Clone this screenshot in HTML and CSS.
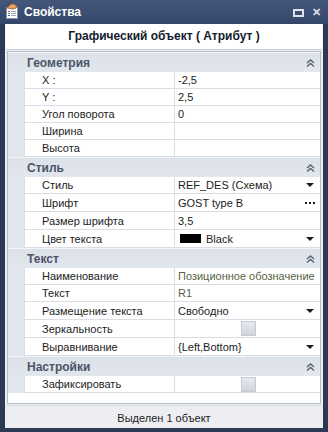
FILE: index.html
```html
<!DOCTYPE html>
<html lang="ru">
<head>
  <meta charset="UTF-8">
  <title>Свойства</title>
  <link rel="stylesheet" href="styles.css">
</head>
<body>
  <div class="window">

    <div class="titlebar">
      <svg class="app-icon" width="16" height="16" viewBox="0 0 16 16">
        <rect x="2.5" y="4.5" width="11" height="11" fill="#fff" stroke="#8a96a8"/>
        <rect x="4" y="8" width="2" height="1" fill="#d23c2c"/>
        <rect x="7" y="8" width="5" height="1" fill="#9aa4b4"/>
        <rect x="4" y="10" width="2" height="1" fill="#3c9a3c"/>
        <rect x="7" y="10" width="5" height="1" fill="#9aa4b4"/>
        <rect x="4" y="12" width="2" height="1" fill="#3c64c8"/>
        <rect x="7" y="12" width="5" height="1" fill="#9aa4b4"/>
        <path d="M3 5 L7 1 L10 1 L13 3 L12 5 L9 6 Z" fill="#e8a060" stroke="#8c5a2c" stroke-width="0.8"/>
      </svg>
      <span class="title">Свойства</span>
      <span class="win-btn max"></span>
      <span class="win-btn close">✕</span>
    </div>

    <div class="body">
      <div class="caption">Графический объект ( Атрибут )</div>

      <div class="grid">

        <div class="section">Геометрия<svg class="fold" width="9" height="8" viewBox="0 0 9 8"><path d="M1 4 L4.5 1 L8 4 M1 7.5 L4.5 4.5 L8 7.5" fill="none" stroke="#5a6272" stroke-width="1.4"/></svg></div>
        <div class="row"><span class="label">X :</span><span class="value">-2,5</span></div>
        <div class="row"><span class="label">Y :</span><span class="value">2,5</span></div>
        <div class="row"><span class="label">Угол поворота</span><span class="value">0</span></div>
        <div class="row"><span class="label">Ширина</span><span class="value"></span></div>
        <div class="row"><span class="label">Высота</span><span class="value"></span></div>

        <div class="section">Стиль<svg class="fold" width="9" height="8" viewBox="0 0 9 8"><path d="M1 4 L4.5 1 L8 4 M1 7.5 L4.5 4.5 L8 7.5" fill="none" stroke="#5a6272" stroke-width="1.4"/></svg></div>
        <div class="row"><span class="label">Стиль</span><span class="value">REF_DES (Схема)<i class="arrow"></i></span></div>
        <div class="row tall"><span class="label">Шрифт</span><span class="value">GOST type B<i class="dots"><b></b><b></b><b></b></i></span></div>
        <div class="row tall"><span class="label">Размер шрифта</span><span class="value">3,5</span></div>
        <div class="row tall"><span class="label">Цвет текста</span><span class="value"><i class="swatch"></i>Black<i class="arrow"></i></span></div>

        <div class="section">Текст<svg class="fold" width="9" height="8" viewBox="0 0 9 8"><path d="M1 4 L4.5 1 L8 4 M1 7.5 L4.5 4.5 L8 7.5" fill="none" stroke="#5a6272" stroke-width="1.4"/></svg></div>
        <div class="row"><span class="label">Наименование</span><span class="value muted">Позиционное обозначение</span></div>
        <div class="row"><span class="label">Текст</span><span class="value muted">R1</span></div>
        <div class="row tall"><span class="label">Размещение текста</span><span class="value">Свободно<i class="arrow"></i></span></div>
        <div class="row tall"><span class="label">Зеркальность</span><span class="value center"><i class="check"></i></span></div>
        <div class="row tall"><span class="label">Выравнивание</span><span class="value">{Left,Bottom}<i class="arrow"></i></span></div>

        <div class="section">Настройки<svg class="fold" width="9" height="8" viewBox="0 0 9 8"><path d="M1 4 L4.5 1 L8 4 M1 7.5 L4.5 4.5 L8 7.5" fill="none" stroke="#5a6272" stroke-width="1.4"/></svg></div>
        <div class="row"><span class="label">Зафиксировать</span><span class="value center"><i class="check"></i></span></div>

      </div>
    </div>

    <div class="status">Выделен 1 объект</div>

  </div>
</body>
</html>
```

FILE: styles.css
```css
body {
  margin: 0;
  background: #2a3852;
  font-family: "Liberation Sans", Arial, sans-serif;
  font-size: 11px;
  color: #1c1c1c;
}

.window {
  width: 328px;
  height: 432px;
  display: flex;
  flex-direction: column;
  background: #2c3a55;
  box-sizing: border-box;
  padding: 0 5px 4px 5px;
}

.titlebar {
  height: 24px;
  display: flex;
  align-items: center;
  margin: 0 -5px;
  padding: 0 6px 0 4px;
  background: linear-gradient(#44577a, #34466a);
  color: #fff;
}

.app-icon {
  margin-right: 4px;
  margin-top: -2px;
}

.title {
  font-weight: bold;
  font-size: 12px;
  flex: 1;
}

.win-btn {
  color: #dde3ec;
  font-weight: bold;
}

.max {
  width: 7px;
  height: 4px;
  border: 2px solid #dde3ec;
  margin-right: 8px;
  margin-top: 1px;
}

.close {
  font-size: 11px;
  margin-right: 1px;
}

.body {
  flex: 1;
  display: flex;
  flex-direction: column;
  background: #eef0f4;
  padding-bottom: 1px;
}

.caption {
  height: 25px;
  line-height: 25px;
  background: #fff;
  text-align: center;
  font-weight: bold;
  font-size: 12px;
  color: #141d30;
  margin: 0 1px;
  border-bottom: 1px solid #c8ced8;
}

.grid {
  flex: 1;
  margin: 1px 2px 0 2px;
  border: 1px solid #b4bcc8;
  background: #fff;
}

.section {
  height: 20px;
  display: flex;
  align-items: center;
  padding-left: 19px;
  background: linear-gradient(#dde2ea, #e2e6ed);
  border-top: 1px solid #f2f4f7;
  box-sizing: border-box;
  font-weight: bold;
  font-size: 12px;
  color: #4b5567;
}

.fold {
  margin-left: auto;
  margin-right: 5px;
}

.row {
  height: 17px;
  display: grid;
  grid-template-columns: 150px 1fr;
  margin-left: 16px;
  box-sizing: border-box;
  border-bottom: 1px solid #dadee4;
  border-left: 1px solid #dadee4;
  box-shadow: -16px 0 0 #e1e5ec;
}

.row.tall {
  height: 18px;
}

.label {
  padding-left: 17px;
  border-right: 1px solid #dadee4;
  display: flex;
  align-items: center;
  white-space: nowrap;
}

.value {
  padding-left: 3px;
  display: flex;
  align-items: center;
  white-space: nowrap;
  overflow: hidden;
}

.value.muted {
  color: #586444;
}

.value.center {
  justify-content: center;
}

.arrow {
  margin-left: auto;
  margin-right: 6px;
  border-left: 4px solid transparent;
  border-right: 4px solid transparent;
  border-top: 4px solid #1c1c1c;
}

.dots {
  margin-left: auto;
  margin-right: 5px;
  display: flex;
  gap: 2px;
}

.dots b {
  width: 2px;
  height: 2px;
  background: #1c1c1c;
}

.swatch {
  width: 21px;
  height: 9px;
  background: #000;
  margin: 0 5px 0 2px;
}

.check {
  width: 13px;
  height: 13px;
  border: 1px solid #c4c9d2;
  background: linear-gradient(#e6e9ee, #cfd4dc);
  margin-left: -2px;
}

.status {
  height: 22px;
  line-height: 24px;
  text-align: center;
  background: #eceef2;
  border-top: 1px solid #d6dae2;
}
```
